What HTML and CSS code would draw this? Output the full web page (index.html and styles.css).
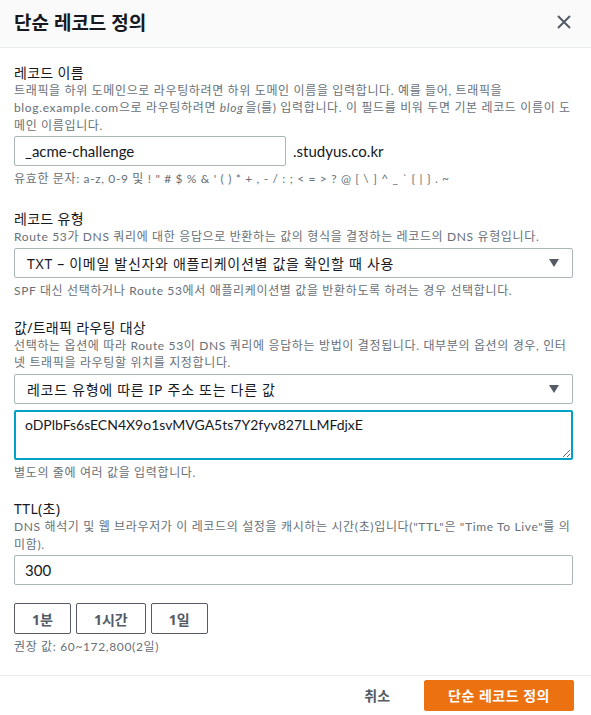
FILE: index.html
```html
<!DOCTYPE html>
<html lang="ko">
<head>
    <meta charset="UTF-8">
    <meta name="viewport" content="width=device-width, initial-scale=1.0">
    <title>단순 레코드 정의</title>
    <link rel="stylesheet" href="styles.css">
</head>
<body>
    <div class="modal">
        <div class="modal-header">
            <h2>단순 레코드 정의</h2>
            <button class="close" aria-label="닫기">
                <svg width="14" height="14" viewBox="0 0 14 14">
                    <path d="M1 1 L13 13 M13 1 L1 13" stroke="#545b64" stroke-width="2" fill="none"/>
                </svg>
            </button>
        </div>

        <div class="modal-body">
            <div class="field field-name">
                <div class="label">레코드 이름</div>
                <div class="desc">트래픽을 하위 도메인으로 라우팅하려면 하위 도메인 이름을 입력합니다. 예를 들어, 트래픽을 blog.example.com으로 라우팅하려면 <i>blog</i>을(를) 입력합니다. 이 필드를 비워 두면 기본 레코드 이름이 도메인 이름입니다.</div>
                <div class="name-row">
                    <input class="input name-input" type="text" value="_acme-challenge">
                    <span class="suffix">.studyus.co.kr</span>
                </div>
                <div class="hint">유효한 문자: a-z, 0-9 및 ! " # $ % &amp; ' ( ) * + , - / : ; &lt; = &gt; ? @ [ \ ] ^ _ ` { | } . ~</div>
            </div>

            <div class="field">
                <div class="label">레코드 유형</div>
                <div class="desc">Route 53가 DNS 쿼리에 대한 응답으로 반환하는 값의 형식을 결정하는 레코드의 DNS 유형입니다.</div>
                <div class="select">
                    <span>TXT – 이메일 발신자와 애플리케이션별 값을 확인할 때 사용</span>
                    <span class="caret"></span>
                </div>
                <div class="hint">SPF 대신 선택하거나 Route 53에서 애플리케이션별 값을 반환하도록 하려는 경우 선택합니다.</div>
            </div>

            <div class="field field-value">
                <div class="label">값/트래픽 라우팅 대상</div>
                <div class="desc">선택하는 옵션에 따라 Route 53이 DNS 쿼리에 응답하는 방법이 결정됩니다. 대부분의 옵션의 경우, 인터넷 트래픽을 라우팅할 위치를 지정합니다.</div>
                <div class="select">
                    <span>레코드 유형에 따른 IP 주소 또는 다른 값</span>
                    <span class="caret"></span>
                </div>
                <textarea class="value-area">oDPlbFs6sECN4X9o1svMVGA5ts7Y2fyv827LLMFdjxE</textarea>
                <div class="hint">별도의 줄에 여러 값을 입력합니다.</div>
            </div>

            <div class="field">
                <div class="label">TTL(초)</div>
                <div class="desc">DNS 해석기 및 웹 브라우저가 이 레코드의 설정을 캐시하는 시간(초)입니다("TTL"은 "Time To Live"를 의미함).</div>
                <input class="input" type="text" value="300">
                <div class="ttl-buttons">
                    <button class="btn-normal">1분</button>
                    <button class="btn-normal">1시간</button>
                    <button class="btn-normal">1일</button>
                </div>
                <div class="hint">권장 값: 60~172,800(2일)</div>
            </div>
        </div>

        <div class="modal-footer">
            <button class="btn-link">취소</button>
            <button class="btn-primary">단순 레코드 정의</button>
        </div>
    </div>
</body>
</html>
```

FILE: styles.css
```css
body {
    margin: 0;
    background: #fff;
    font-family: 'Noto Sans', 'Noto Sans CJK KR', sans-serif;
    color: #16191f;
}

.modal {
    width: 591px;
    height: 715px;
    display: flex;
    flex-direction: column;
}

.modal-header {
    box-sizing: border-box;
    height: 54px;
    background: #fafafa;
    border-bottom: 1px solid #eaeded;
    display: flex;
    align-items: center;
    justify-content: space-between;
    padding: 0 20px 2px 14px;
}

.modal-header h2 {
    margin: 0;
    font-size: 19px;
    font-weight: 700;
}

.close {
    border: none;
    background: none;
    padding: 0;
    display: flex;
}

.modal-body {
    flex: 1;
    padding: 16px 18px 0 14px;
}

.field {
    margin-bottom: 19px;
}

.field-name {
    margin-bottom: 22px;
}

.label {
    font-size: 14px;
    line-height: 18px;
    letter-spacing: 0.3px;
}

.desc,
.hint {
    font-family: Lato, 'Noto Sans CJK KR', sans-serif;
    font-size: 12px;
    line-height: 17.5px;
    color: #687078;
    letter-spacing: 0.65px;
}

.desc {
    margin-bottom: 2px;
}

.desc i {
    margin-right: 2px;
}

.hint {
    margin-top: 4px;
}

.input {
    box-sizing: border-box;
    width: 100%;
    height: 30px;
    border: 1px solid #aab7b8;
    border-radius: 2px;
    padding: 0 10px;
    font-family: Lato, 'Noto Sans CJK KR', sans-serif;
    font-size: 15px;
    color: #16191f;
}

.name-row {
    display: flex;
    align-items: center;
}

.name-input {
    width: 272px;
}

.suffix {
    font-family: Lato, sans-serif;
    font-size: 15px;
    margin-left: 7px;
}

.select {
    box-sizing: border-box;
    height: 30px;
    margin-top: 3px;
    border: 1px solid #aab7b8;
    border-radius: 2px;
    padding: 0 13px 0 12px;
    display: flex;
    align-items: center;
    justify-content: space-between;
    font-size: 14px;
    letter-spacing: 0.7px;
}

.field-value .select {
    margin-top: 0;
}

.caret {
    width: 0;
    height: 0;
    border-left: 5.5px solid transparent;
    border-right: 5.5px solid transparent;
    border-top: 8px solid #545b64;
}

.value-area {
    display: block;
    box-sizing: border-box;
    width: 100%;
    height: 50px;
    margin-top: 6px;
    border: 2px solid #00a1c9;
    border-radius: 2px;
    padding: 4px 9px;
    font-family: Lato, sans-serif;
    font-size: 14px;
    color: #16191f;
    outline: none;
}

.ttl-buttons {
    display: flex;
    gap: 5px;
    margin-top: 18px;
}

.btn-normal {
    height: 31px;
    padding: 0 17px;
    background: #fff;
    border: 1px solid #545b64;
    border-radius: 2px;
    font: inherit;
    font-size: 14px;
    font-weight: 700;
    color: #545b64;
}

.modal-footer {
    border-top: 1px solid #eaeded;
    height: 45px;
    display: flex;
    align-items: center;
    justify-content: flex-end;
    padding: 0 17px;
    gap: 24px;
}

.btn-link {
    border: none;
    background: none;
    font: inherit;
    font-size: 14px;
    font-weight: 700;
    color: #545b64;
    padding: 0 10px;
}

.btn-primary {
    height: 31px;
    padding: 0 23px;
    background: #ec7211;
    border: 1px solid #ec7211;
    border-radius: 2px;
    color: #fff;
    font: inherit;
    font-size: 14px;
    font-weight: 700;
    letter-spacing: 0.5px;
}
```
